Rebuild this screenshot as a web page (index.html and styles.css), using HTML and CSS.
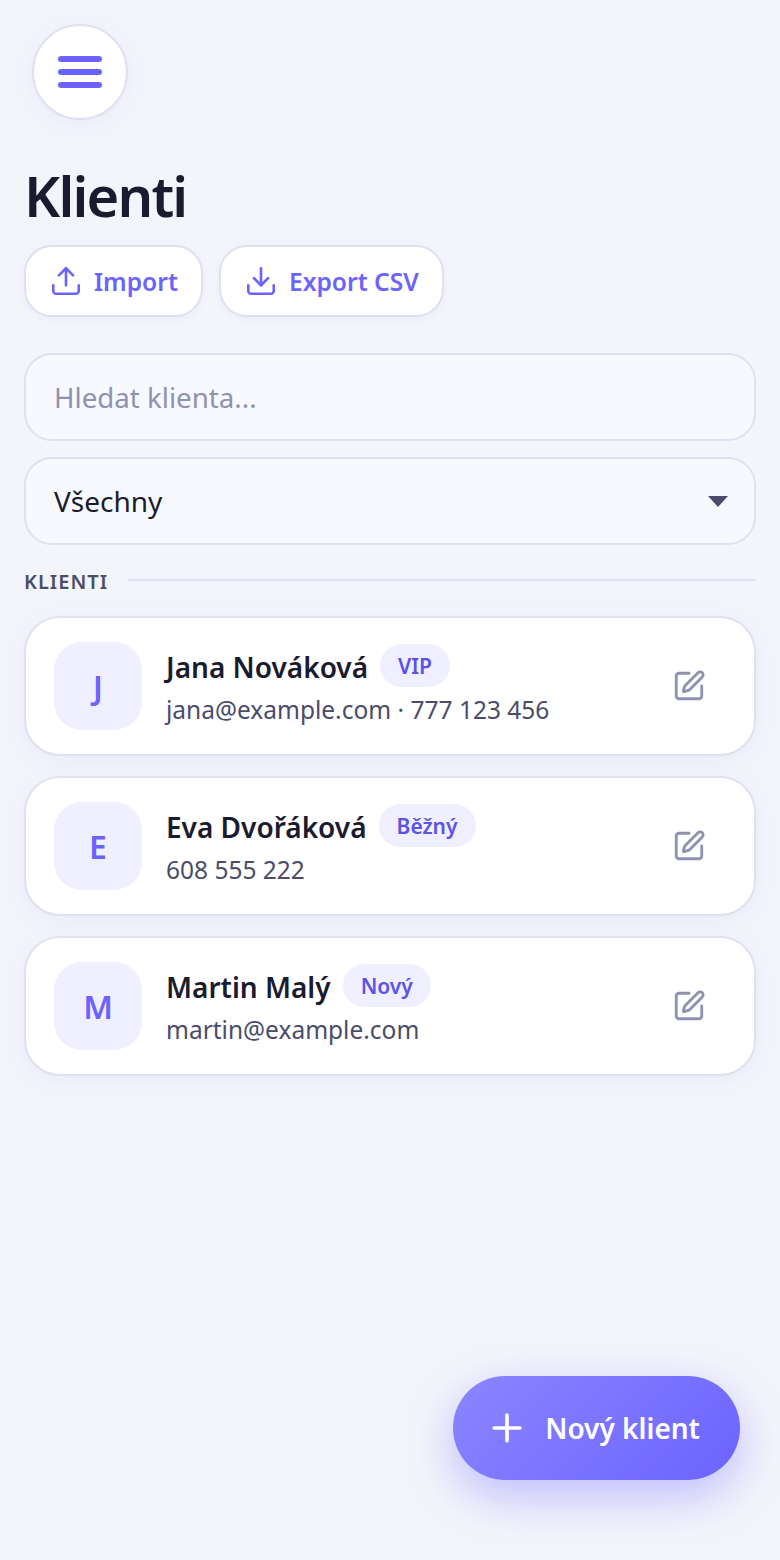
FILE: index.html
```html
<!DOCTYPE html>
<html lang="cs">
<head>
<meta charset="utf-8">
<title>Klienti</title>
<link rel="stylesheet" href="styles.css">
</head>
<body>
<div class="page">
  <button class="menu-btn" aria-label="Menu">
    <svg width="44" height="32" viewBox="0 0 44 32"><rect y="0" width="44" height="6" rx="3"/><rect y="13" width="44" height="6" rx="3"/><rect y="26" width="44" height="6" rx="3"/></svg>
  </button>
  <h1 class="title">Klienti</h1>
  <div class="actions">
    <button class="action">
      <svg class="action-icon" width="34" height="34" viewBox="0 0 24 24"><path d="M21 15v4a2 2 0 0 1-2 2H5a2 2 0 0 1-2-2v-4"/><path d="M17 8l-5-5-5 5"/><path d="M12 3v12"/></svg>
      <span>Import</span>
    </button>
    <button class="action">
      <svg class="action-icon" width="34" height="34" viewBox="0 0 24 24"><path d="M21 15v4a2 2 0 0 1-2 2H5a2 2 0 0 1-2-2v-4"/><path d="M7 10l5 5 5-5"/><path d="M12 15V3"/></svg>
      <span>Export CSV</span>
    </button>
  </div>
  <input class="field search" type="text" placeholder="Hledat klienta...">
  <div class="field select">
    <span>Všechny</span>
    <svg class="caret" width="20" height="12" viewBox="0 0 20 12"><path d="M0 1h20l-10 11z"/></svg>
  </div>
  <div class="section">
    <span class="section-label">KLIENTI</span>
    <span class="section-line"></span>
  </div>
  <div class="list">
    <article class="card">
      <div class="avatar">J</div>
      <div class="info">
        <div class="name-row"><span class="name">Jana Nováková</span><span class="tag">VIP</span></div>
        <div class="contact">jana@example.com · 777 123 456</div>
      </div>
      <svg class="edit" width="34" height="34" viewBox="0 0 24 24"><path d="M12 3H5a2 2 0 0 0-2 2v14a2 2 0 0 0 2 2h14a2 2 0 0 0 2-2v-7"/><path d="M18.375 2.625a1 1 0 0 1 3 3l-9.013 9.014a2 2 0 0 1-.853.505l-2.873.84a.5.5 0 0 1-.62-.62l.84-2.873a2 2 0 0 1 .506-.852z"/></svg>
    </article>
    <article class="card">
      <div class="avatar">E</div>
      <div class="info">
        <div class="name-row"><span class="name">Eva Dvořáková</span><span class="tag">Běžný</span></div>
        <div class="contact">608 555 222</div>
      </div>
      <svg class="edit" width="34" height="34" viewBox="0 0 24 24"><path d="M12 3H5a2 2 0 0 0-2 2v14a2 2 0 0 0 2 2h14a2 2 0 0 0 2-2v-7"/><path d="M18.375 2.625a1 1 0 0 1 3 3l-9.013 9.014a2 2 0 0 1-.853.505l-2.873.84a.5.5 0 0 1-.62-.62l.84-2.873a2 2 0 0 1 .506-.852z"/></svg>
    </article>
    <article class="card">
      <div class="avatar">M</div>
      <div class="info">
        <div class="name-row"><span class="name">Martin Malý</span><span class="tag">Nový</span></div>
        <div class="contact">martin@example.com</div>
      </div>
      <svg class="edit" width="34" height="34" viewBox="0 0 24 24"><path d="M12 3H5a2 2 0 0 0-2 2v14a2 2 0 0 0 2 2h14a2 2 0 0 0 2-2v-7"/><path d="M18.375 2.625a1 1 0 0 1 3 3l-9.013 9.014a2 2 0 0 1-.853.505l-2.873.84a.5.5 0 0 1-.62-.62l.84-2.873a2 2 0 0 1 .506-.852z"/></svg>
    </article>
  </div>
  <button class="fab">
    <svg width="44" height="44" viewBox="0 0 24 24"><path d="M5 12h14M12 5v14"/></svg>
    <span>Nový klient</span>
  </button>
</div>
</body>
</html>
```
FILE: styles.css
```css
* { box-sizing: border-box; }
html, body { margin: 0; height: 100%; }
body {
  background: #f4f5fb;
  color: #1a1b2e;
  font-family: "Noto Sans", "Open Sans", sans-serif;
}
button { font-family: inherit; cursor: pointer; }
.page {
  position: relative;
  width: 780px;
  height: 1560px;
  padding: 24px 24px 0;
  overflow: hidden;
}
.menu-btn {
  display: flex;
  align-items: center;
  justify-content: center;
  width: 96px;
  height: 96px;
  margin-left: 8px;
  padding: 0;
  background: #fff;
  border: 2px solid #e0e1f0;
  border-radius: 50%;
  box-shadow: 0 4px 24px rgba(108, 99, 255, .08);
}
.menu-btn svg { fill: #6c63ff; }
.title {
  margin: 37px 0 12px;
  font-size: 56px;
  line-height: 76px;
  font-weight: 600;
  letter-spacing: -1.8px;
  color: #1a1b2e;
}
.actions { display: flex; gap: 16px; margin-bottom: 36px; }
.action {
  display: flex;
  align-items: center;
  gap: 11px;
  height: 72px;
  padding: 0 23px 0 23px;
  background: #fff;
  border: 2px solid #e0e1f0;
  border-radius: 28px;
  color: #6c63ff;
  font-size: 24.6px;
  font-weight: 600;
  box-shadow: 0 2px 8px rgba(108, 99, 255, .07);
}
.action-icon { fill: none; stroke: currentColor; stroke-width: 1.85; stroke-linecap: round; stroke-linejoin: round; }
.field {
  display: block;
  width: 100%;
  height: 88px;
  padding: 0 28px;
  background: #f8f9ff;
  border: 2px solid #e0e1f0;
  border-radius: 28px;
  color: #1a1b2e;
  font-family: inherit;
  font-size: 28px;
  outline: none;
}
.search { margin-bottom: 16px; font-size: 27.7px; }
.search::placeholder { color: #8e92b0; opacity: 1; }
.select { display: flex; align-items: center; justify-content: space-between; padding-right: 26px; }
.caret { fill: #4a4c6a; }
.section { display: flex; align-items: center; gap: 20px; height: 28px; margin: 22px 0 21px; }
.section-label { font-size: 20px; font-weight: 600; letter-spacing: 1px; color: #4a4c6a; }
.section-line { flex: 1; height: 2px; margin-bottom: 3px; background: #e0e1f3; }
.list { display: flex; flex-direction: column; gap: 20px; }
.card {
  display: flex;
  align-items: center;
  height: 140px;
  padding: 0 28px;
  background: #fff;
  border: 2px solid #e0e1f0;
  border-radius: 36px;
  box-shadow: 0 4px 24px rgba(108, 99, 255, .08);
}
.avatar {
  display: flex;
  align-items: center;
  justify-content: center;
  flex: none;
  width: 88px;
  height: 88px;
  margin-right: 24px;
  background: #f0efff;
  border-radius: 28px;
  color: #6c63ff;
  font-size: 32px;
  font-weight: 600;
}
.info { flex: 1; }
.name-row { display: flex; align-items: center; gap: 12px; height: 44px; }
.name { font-size: 28px; font-weight: 600; color: #1a1b2e; }
.tag {
  display: flex;
  align-items: center;
  height: 43px;
  margin-top: -2px;
  padding: 0 18px;
  background: #f0efff;
  border-radius: 22px;
  color: #5b52e8;
  font-size: 21px;
  font-weight: 600;
}
.contact { margin-top: 3px; font-size: 24.5px; line-height: 36px; color: #4a4c6a; }
.edit { flex: none; margin-right: 20px; fill: none; stroke: #8e92b0; stroke-width: 2; stroke-linecap: round; stroke-linejoin: round; }
.fab {
  position: absolute;
  right: 40px;
  bottom: 80px;
  display: flex;
  align-items: center;
  gap: 16px;
  height: 104px;
  padding: 0 40px 0 32px;
  background: linear-gradient(135deg, #8b85ff, #6c63ff);
  border: 0;
  border-radius: 52px;
  color: #fff;
  font-size: 28px;
  font-weight: 600;
  box-shadow: 0 16px 48px rgba(108, 99, 255, .4);
}
.fab svg { fill: none; stroke: #fff; stroke-width: 2; stroke-linecap: round; }
```
